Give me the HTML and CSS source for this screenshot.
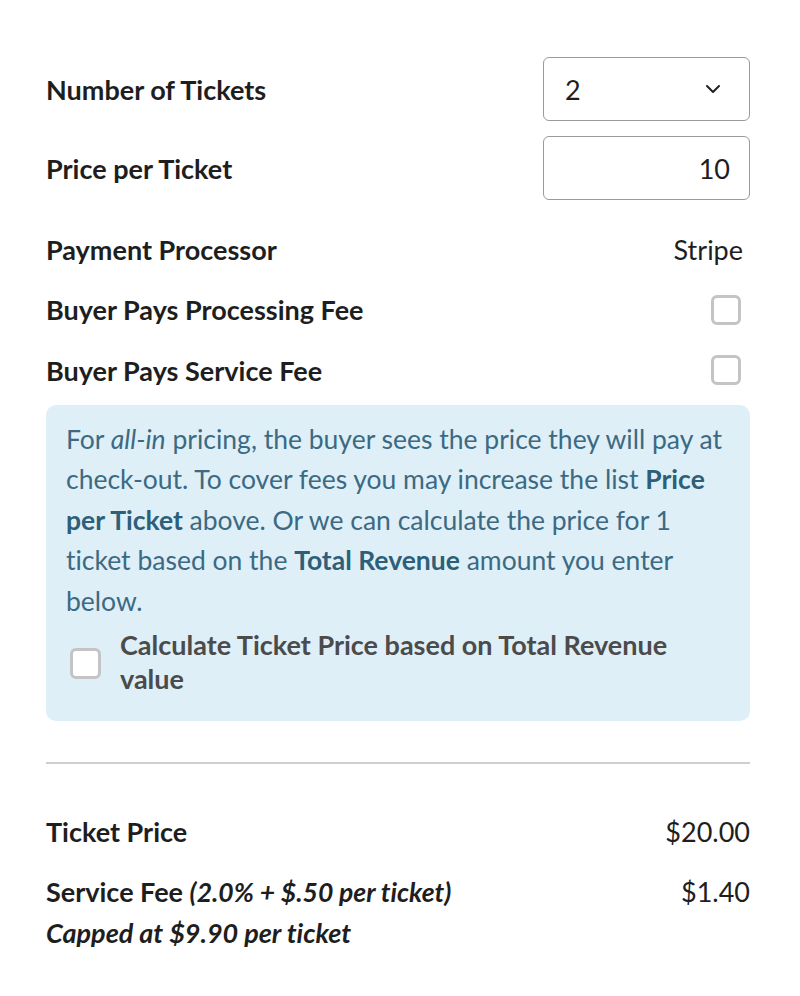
FILE: index.html
```html
<!DOCTYPE html>
<html>
<head>
<meta charset="utf-8">
<link rel="stylesheet" href="styles.css">
</head>
<body>
<div class="page">
  <div class="row field-row">
    <span class="label">Number of Tickets</span>
    <div class="select">
      <span>2</span>
      <svg class="chev" width="16" height="10" viewBox="0 0 16 10"><path d="M2 2 L8 8 L14 2" fill="none" stroke="#222" stroke-width="2" stroke-linecap="round" stroke-linejoin="round"/></svg>
    </div>
  </div>
  <div class="row field-row second">
    <span class="label">Price per Ticket</span>
    <div class="input">10</div>
  </div>
  <div class="row text-row first-text">
    <span class="label">Payment Processor</span>
    <span class="value pp">Stripe</span>
  </div>
  <div class="row text-row">
    <span class="label">Buyer Pays Processing Fee</span>
    <span class="check"></span>
  </div>
  <div class="row text-row">
    <span class="label">Buyer Pays Service Fee</span>
    <span class="check"></span>
  </div>
  <div class="info">
    <p>For <em>all-in</em> pricing, the buyer sees the price they will pay at check-out. To cover fees you may increase the list <strong>Price per Ticket</strong> above. Or we can calculate the price for 1 ticket based on the <strong>Total Revenue</strong> amount you enter below.</p>
    <div class="calc">
      <span class="check inner"></span>
      <span class="calc-label">Calculate Ticket Price based on Total Revenue value</span>
    </div>
  </div>
  <hr class="divider">
  <div class="row sum-row">
    <span class="label">Ticket Price</span>
    <span class="value">$20.00</span>
  </div>
  <div class="row sum-row fee">
    <span class="label">Service Fee <em>(2.0% + $.50 per ticket)</em></span>
    <span class="value">$1.40</span>
  </div>
  <div class="cap">Capped at $9.90 per ticket</div>
</div>
</body>
</html>
```

FILE: styles.css
```css
html, body {
  margin: 0;
  padding: 0;
  background: #ffffff;
}
body {
  font-family: Lato, "Open Sans", sans-serif;
  font-size: 27px;
  color: #1e1e1e;
  font-variant-ligatures: no-common-ligatures;
}
.page {
  width: 704px;
  margin-left: 46px;
  padding-top: 57px;
}
.row {
  display: flex;
  align-items: center;
  justify-content: space-between;
}
.label {
  font-weight: 700;
}
.field-row {
  height: 64px;
}
.field-row.second {
  margin-top: 15px;
}
.select, .input {
  box-sizing: border-box;
  width: 207px;
  height: 64px;
  border: 1px solid #9a9a9a;
  border-radius: 6px;
  display: flex;
  align-items: center;
  padding: 0 20px 0 21px;
}
.select {
  justify-content: space-between;
  padding-right: 28px;
}
.chev {
  display: block;
}
.input {
  justify-content: flex-end;
  padding-right: 19px;
}
.text-row {
  height: 60.5px;
}
.first-text {
  margin-top: 19px;
}
.value {
  font-weight: 400;
}
.pp {
  margin-right: 7px;
}
.check {
  box-sizing: border-box;
  width: 30px;
  height: 30px;
  border: 3px solid #c4c4c4;
  border-radius: 6px;
  background: #fff;
  margin-right: 9px;
}
.info {
  margin-top: 4px;
  background: #dfeff8;
  border-radius: 10px;
  padding: 14px 18px 25px 20px;
  color: #3b6a82;
  font-size: 26.5px;
}
.info p {
  margin: 0;
  line-height: 40.5px;
}
.info strong {
  font-weight: 700;
  color: #2d5f78;
}
.calc {
  display: flex;
  align-items: center;
  margin-top: 7px;
}
.check.inner {
  width: 31px;
  height: 31px;
  flex: none;
  margin: 2px 19px 0 4px;
}
.calc-label {
  font-weight: 700;
  color: #4b4b4b;
  line-height: 34px;
  font-size: 27px;
}
.divider {
  border: 0;
  height: 2px;
  background: #cfcfcf;
  margin: 41px 0 0 0;
}
.sum-row {
  height: 40px;
  margin-top: 47px;
}
.sum-row.fee {
  margin-top: 20px;
}
.label em {
  font-style: italic;
  font-size: 26.5px;
}
.cap {
  font-weight: 700;
  font-style: italic;
  line-height: 40px;
  margin-top: 2px;
}
```
